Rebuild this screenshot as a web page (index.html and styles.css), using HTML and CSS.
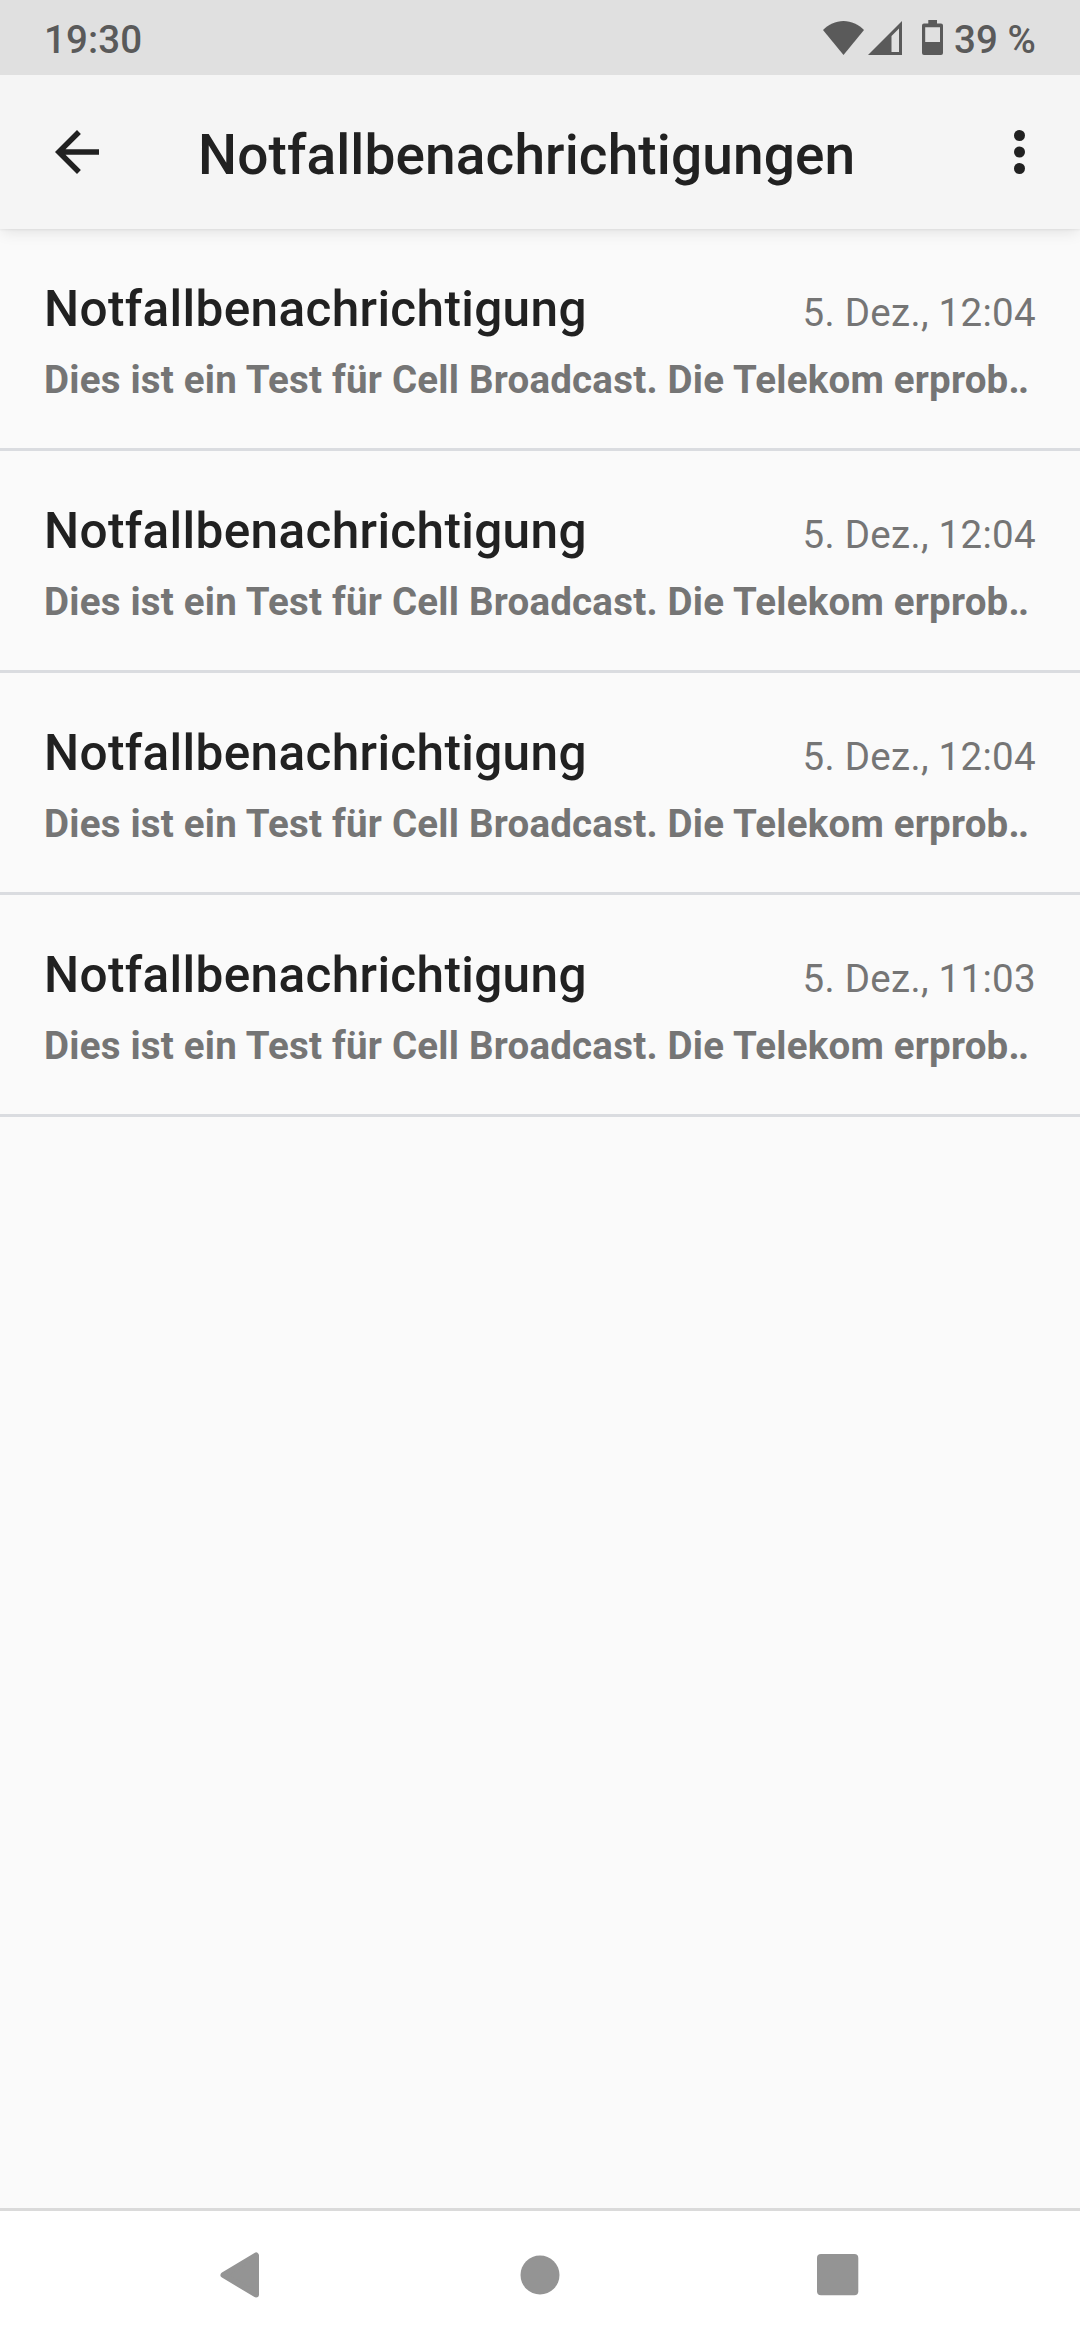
FILE: index.html
```html
<!DOCTYPE html>
<html lang="de">

<head>
    <meta charset="UTF-8">
    <meta name="viewport" content="width=device-width, initial-scale=1.0">
    <title>Notfallbenachrichtigungen</title>
    <link rel="stylesheet" href="styles.css">
</head>

<body>
    <div class="statusbar">
        <span class="clock">19:30</span>
        <div class="status-icons">
            <svg class="wifi" width="41" height="34" viewBox="0 0 41 34"><path d="M20.500 34L0 9C5.500 3.500 12.500 0 20.500 0S35.500 3.500 41 9z" fill="#5a5a5a"/></svg>
            <svg class="signal" width="34" height="34" viewBox="0 0 34 34"><path fill-rule="evenodd" d="M0 34L34 0V34zM23.500 15V31H31V7.500z" fill="#5a5a5a"/></svg>
            <svg class="battery" width="21" height="35" viewBox="0 0 21 35"><path fill-rule="evenodd" d="M6.300 0h8.700v3.500h4q2 0 2 2v27.500q0 2-2 2H2q-2 0-2-2V5.500q0-2 2-2h4.300zM3.200 7.200v14.800h14.800V7.200z" fill="#5a5a5a"/></svg>
            <span class="percent">39 %</span>
        </div>
    </div>

    <header class="toolbar">
        <svg class="back" width="44" height="44" viewBox="4 4 16 16"><path d="M20 11H7.830l5.590-5.590L12 4l-8 8 8 8 1.410-1.410L7.830 13H20v-2z" fill="#212121"/></svg>
        <h1 class="title">Notfallbenachrichtigungen</h1>
        <svg class="more" width="11" height="44" viewBox="10 4 4 16" fill="#212121"><circle cx="12" cy="6" r="2"/><circle cx="12" cy="12" r="2"/><circle cx="12" cy="18" r="2"/></svg>
    </header>

    <main class="list">
        <div class="entry">
            <div class="entry-top"><span class="name">Notfallbenachrichtigung</span><span class="date">5. Dez., 12:04</span></div>
            <div class="message">Dies ist ein Test für Cell Broadcast. Die Telekom erprob<span class="dots">..</span></div>
        </div>
        <div class="entry">
            <div class="entry-top"><span class="name">Notfallbenachrichtigung</span><span class="date">5. Dez., 12:04</span></div>
            <div class="message">Dies ist ein Test für Cell Broadcast. Die Telekom erprob<span class="dots">..</span></div>
        </div>
        <div class="entry">
            <div class="entry-top"><span class="name">Notfallbenachrichtigung</span><span class="date">5. Dez., 12:04</span></div>
            <div class="message">Dies ist ein Test für Cell Broadcast. Die Telekom erprob<span class="dots">..</span></div>
        </div>
        <div class="entry">
            <div class="entry-top"><span class="name">Notfallbenachrichtigung</span><span class="date">5. Dez., 11:03</span></div>
            <div class="message">Dies ist ein Test für Cell Broadcast. Die Telekom erprob<span class="dots">..</span></div>
        </div>
    </main>

    <nav class="navbar">
        <svg width="42" height="46" viewBox="0 0 42 46"><path d="M36 3.500v39L3.500 23z" fill="#949494" stroke="#949494" stroke-width="6" stroke-linejoin="round"/></svg>
        <svg width="42" height="42" viewBox="0 0 42 42"><circle cx="21" cy="21" r="19.500" fill="#949494"/></svg>
        <svg width="42" height="42" viewBox="0 0 42 42"><rect width="41.300" height="41.300" rx="4" fill="#949494"/></svg>
    </nav>
</body>

</html>
```

FILE: styles.css
```css
* {
    box-sizing: border-box;
}

body {
    margin: 0;
    height: 2340px;
    display: flex;
    flex-direction: column;
    background-color: #fafafa;
    color: #212121;
    font-family: Roboto, sans-serif;
}

.statusbar {
    height: 75px;
    padding: 4px 44px 0;
    display: flex;
    justify-content: space-between;
    align-items: center;
    background-color: #e0e0e0;
    color: #5a5a5a;
    font-size: 38.5px;
    font-weight: 500;
    letter-spacing: 0.1px;
}

.status-icons {
    display: flex;
    align-items: center;
}

.wifi, .signal {
    margin-bottom: 4px;
}

.signal {
    margin-left: 4px;
}

.battery {
    margin: 0 11px 5px 20px;
}

.toolbar {
    height: 154px;
    padding: 0 55.5px 0 55px;
    display: flex;
    align-items: center;
    background-color: #f5f5f5;
    box-shadow: 0 5px 14px -2px rgba(0, 0, 0, 0.1), 0 1px 2px rgba(0, 0, 0, 0.06);
    clip-path: inset(0 0 -30px 0);
}

.title {
    margin: 6px 0 0 99px;
    flex: 1;
    font-size: 55px;
    line-height: 64px;
    font-weight: 500;
    letter-spacing: 0.12px;
}

.list {
    flex: 1;
}

.entry {
    height: 222px;
    padding: 51px 44px 0;
    border-bottom: 3px solid #dadce0;
}

.entry-top {
    display: flex;
    justify-content: space-between;
    align-items: baseline;
}

.name {
    font-size: 49.5px;
    line-height: 58px;
    font-weight: 500;
    letter-spacing: 0.35px;
}

.date {
    color: #757575;
    font-size: 38.5px;
    letter-spacing: 0.3px;
}

.message {
    margin-top: 19px;
    color: #757575;
    font-size: 38.5px;
    line-height: 45px;
    font-weight: 700;
    letter-spacing: 0.21px;
    white-space: nowrap;
}

.dots {
    letter-spacing: -1.5px;
}

.navbar {
    height: 132px;
    padding: 0 221px 2px 220px;
    display: flex;
    justify-content: space-between;
    align-items: center;
    background-color: #fff;
    border-top: 3px solid #dadada;
}
```
